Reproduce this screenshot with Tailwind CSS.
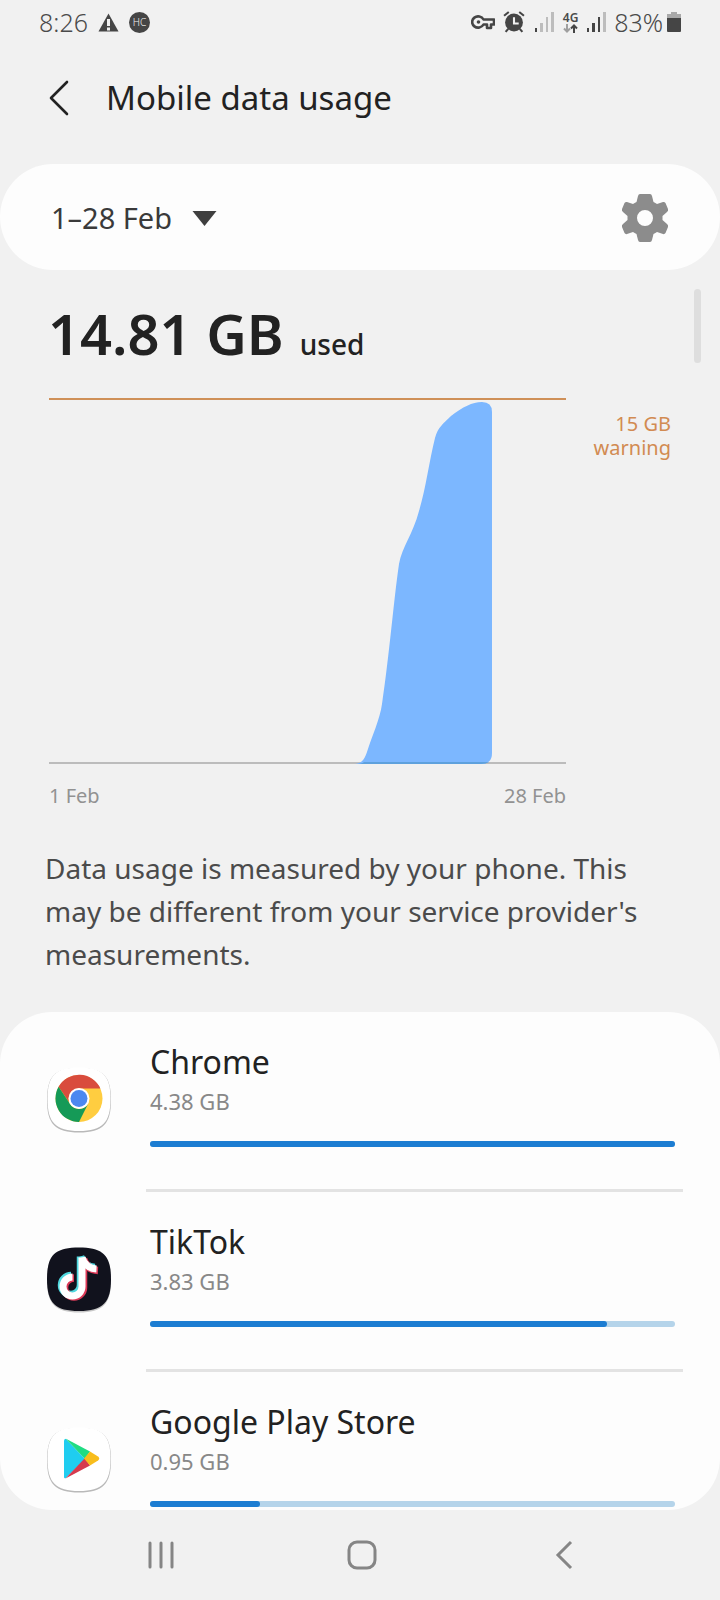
<!DOCTYPE html>
<html lang="en">
<head>
    <meta charset="UTF-8">
    <meta name="viewport" content="width=device-width, initial-scale=1.0">
    <title>Mobile data usage</title>
    <script src="https://cdn.jsdelivr.net/npm/@tailwindcss/browser@4"></script>
</head>
<body class="min-h-screen flex flex-col bg-[#f1f1f1] text-[#222222] font-['Noto_Sans',sans-serif]">
    <!-- Status bar -->
    <div class="flex items-center justify-between h-11 pl-[39px] pr-[39px] text-[25px] leading-[44px] font-light text-[#4a4a4a]">
        <div class="flex items-center">
            <span>8:26</span>
            <svg class="ml-2.5 w-[21px] h-[19px]" viewBox="0 0 21 19" fill="#454545">
                <path d="M10.5 0.5L20.5 18.5H0.5Z" />
                <path d="M9 6h3v7H9zM9 14.5h3v3H9z" fill="#f1f1f1" />
            </svg>
            <span class="ml-2.5 w-[21px] h-[21px] rounded-full bg-[#454545] text-[#f1f1f1] text-[10px] leading-[21px] text-center">HC</span>
        </div>
        <div class="flex items-center">
            <svg class="w-6 h-4" viewBox="0 0 24 16" fill="none" stroke="#454545" stroke-width="2.6">
                <path d="M12.5 5.5A6 5.6 0 1 0 12.5 10.5H16V14H20V10.5H23V5.5Z" stroke-linejoin="round" />
                <circle cx="7.5" cy="8" r="1.8" fill="#454545" stroke="none" />
            </svg>
            <svg class="ml-2 w-[22px] h-[22px]" viewBox="0 0 21 21" fill="none" stroke="#454545" stroke-width="2">
                <circle cx="10.5" cy="11" r="8.5" fill="#454545" stroke="none" />
                <path d="M1 4.5L5.5 1M20 4.5L15.5 1M5 17L2.5 20M16 17l2.5 3" />
                <path d="M10.5 6v6H15" stroke="#f1f1f1" />
            </svg>
            <svg class="ml-2.5 w-[19px] h-5" viewBox="0 0 19 20" fill="#bdbdbd">
                <path d="M0 16h2v4H0z" fill="#454545" />
                <path d="M5 11h3v9H5zM11 5h2v15h-2zM16 0h3v20h-3z" />
            </svg>
            <div class="ml-2 w-[17px] flex flex-col items-center">
                <span class="text-[12px] leading-[12px] font-semibold">4G</span>
                <svg class="w-[15px] h-[9px]" viewBox="0 0 15 9" fill="none" stroke-width="2">
                    <path d="M4 0v7M1 4.5l3 3 3-3" stroke="#9f9f9f" />
                    <path d="M11 9V2M8 4.5l3-3 3 3" stroke="#454545" />
                </svg>
            </div>
            <svg class="ml-2 w-[19px] h-5" viewBox="0 0 19 20" fill="#454545">
                <path d="M0 16h2v4H0zM5 11h3v9H5zM11 5h2v15h-2z" />
                <path d="M16 0h3v20h-3z" fill="#bdbdbd" />
            </svg>
            <span class="ml-2">83%</span>
            <svg class="ml-1 w-[14px] h-5" viewBox="0 0 14 20" fill="#454545">
                <path d="M4 0h6v2h4v5H0V2h4z" fill="#a9a9a9" />
                <path d="M0 6h14v13q0 1-1 1H1q-1 0-1-1z" />
            </svg>
        </div>
    </div>

    <!-- Header -->
    <header class="flex items-center h-[120px] pl-12 pb-3">
        <button type="button" aria-label="Back">
            <svg class="w-6 h-9" viewBox="0 0 24 36" fill="none" stroke="#222222" stroke-width="2.6" stroke-linecap="round" stroke-linejoin="round">
                <path d="M19 2L3 18l16 16" />
            </svg>
        </button>
        <h1 class="ml-[34px] text-[33px] leading-10">Mobile data usage</h1>
    </header>

    <!-- Billing period -->
    <section class="flex items-center justify-between h-[106px] pl-[51px] pr-[51px] pt-0.5 rounded-[53px] bg-[#fdfdfd]">
        <button type="button" class="flex items-center gap-5 text-[29px] leading-10 text-[#3a3a3a]">
            1–28 Feb
            <svg class="w-[25px] h-[15px]" viewBox="0 0 25 15" fill="#3f3f3f"><path d="M0.5 0H24.5L12.5 15Z" /></svg>
        </button>
        <button type="button" aria-label="Settings">
            <svg class="w-12 h-12" viewBox="0 0 48 48" fill="#8c8c8c" fill-rule="evenodd">
                <path d="M19 0H29Q30.5 0 31 2L32.5 8Q34.5 9 36 10L42 8Q43.5 7.5 44.5 9L47 15Q47.5 17 46 18L41.5 22V26L46 30Q47.5 31 47 33L44.5 39Q43.5 40.5 42 40L36 38Q34.5 39 32.5 40L31 46Q30.5 48 29 48H19Q17.5 48 17 46L15.5 40Q13.5 39 12 38L6 40Q4.5 40.5 3.5 39L1 33Q0.5 31 2 30L6.5 26V22L2 18Q0.5 17 1 15L3.5 9Q4.5 7.5 6 8L12 10Q13.5 9 15.5 8L17 2Q17.5 0 19 0ZM24 16A8 8 0 1 0 24 32A8 8 0 1 0 24 16Z" />
            </svg>
        </button>
    </section>

    <!-- Usage -->
    <main class="relative flex flex-col">
        <div class="absolute right-[19px] top-[19px] w-[7px] h-[74px] rounded-full bg-[#dedede]"></div>

        <p class="flex items-baseline gap-4 pl-12 pt-[25px] h-32 leading-[76px] text-[56px] font-semibold">
            14.81 GB
            <span class="text-[28px] font-medium">used</span>
        </p>

        <div class="flex px-[49px]">
            <div class="flex-1">
                <svg class="w-full h-[366px]" viewBox="0 0 517 366" preserveAspectRatio="none">
                    <path d="M0 1H517" stroke="#cf9058" stroke-width="2" />
                    <path d="M0 365H517" stroke="#bcbcbc" stroke-width="2" />
                    <path d="M306 366C312 365 315 363 318 354C323 338 331 321 333 306C340 260 345 200 350 166C353 149 364 136 370 113C377 90 380 64 386 40C389 29 394 26 402 18C414 9 423 4 433 4Q443 4 443 14V355Q443 366 432 366Z" fill="#7cb7ff" />
                    <path d="M306 366Q313 366 315 364H440Q437 366 432 366Z" fill="#5ea1dd" />
                </svg>
                <div class="flex justify-between pt-4 text-[20px] leading-8 text-[#929292]">
                    <span>1 Feb</span>
                    <span>28 Feb</span>
                </div>
            </div>
            <p class="w-[105px] pt-[14px] text-right text-[20px] leading-6 text-[#d28b52]">15 GB<br>warning</p>
        </div>

        <p class="px-[45px] pt-[35px] pb-9 text-[28px] leading-[43px] text-[#4b4b4b]">Data usage is measured by your phone. This may be different from your service provider's measurements.</p>
    </main>

    <!-- Apps -->
    <ul class="rounded-[52px] bg-[#fdfdfd] overflow-hidden">
        <li class="flex gap-[35px] pl-[47px] pr-[37px]">
            <svg class="mt-[55px] w-16 h-[66px] shrink-0" viewBox="0 0 64 66">
                <path d="M32 1C56 1 64 9 64 33S56 65.5 32 65.5S0 57 0 33S8 1 32 1Z" fill="#b9b9b9" />
                <path d="M32 0.5C55.5 0.5 63.5 8.5 63.5 32S55.5 64 32 64S0.5 55.5 0.5 32S8.5 0.5 32 0.5Z" fill="#ffffff" />
                <circle cx="32" cy="31.5" r="23.5" fill="#ffcd40" />
                <path d="M11.6 19.8A23.5 23.5 0 0 1 53.4 21.5H32A10.5 10.5 0 0 0 22 35Z" fill="#d94c3d" />
                <path d="M11.6 19.8L22.9 36.7A10.5 10.5 0 0 0 41 37L32 55A23.5 23.5 0 0 1 11.6 19.8Z" fill="#159a57" />
                <circle cx="32" cy="31.5" r="10.5" fill="#ffffff" />
                <circle cx="32" cy="31.5" r="8.5" fill="#4c88f0" />
            </svg>
            <div class="flex-1 h-[180px] pt-7 border-b-3 border-[#e3e3e3]">
                <div class="pl-1 pr-2">
                    <h2 class="text-[32px] leading-[44px]">Chrome</h2>
                    <p class="text-[22px] leading-[34px] text-[#888888]">4.38 GB</p>
                    <div class="mt-[23px] h-1.5 rounded-full bg-[#b5d4ea]">
                        <div class="h-full rounded-full bg-[#1c7dd2]" style="width: 100%"></div>
                    </div>
                </div>
            </div>
        </li>
        <li class="flex gap-[35px] pl-[47px] pr-[37px]">
            <svg class="mt-[55px] w-16 h-[66px] shrink-0" viewBox="0 0 64 66">
                <path d="M32 1C56 1 64 9 64 33S56 65.5 32 65.5S0 57 0 33S8 1 32 1Z" fill="#c8c8c8" />
                <path d="M32 0.5C56 0.5 64 8.5 64 32S56 64 32 64S0 56 0 32S8 0.5 32 0.5Z" fill="#11121d" />
                <g fill="none" stroke="#4fd8df" stroke-width="7.5">
                    <path d="M33.5 9.5V38A9.5 9.5 0 1 1 24 28.5" />
                    <path d="M33.5 9.5Q37 20 48 20.5" />
                </g>
                <g fill="none" stroke="#dd3a58" stroke-width="7.5">
                    <path d="M36.5 12V40.5A9.5 9.5 0 1 1 27 31" />
                    <path d="M36.5 12Q40 23 51 23.5" />
                </g>
                <g fill="none" stroke="#ffffff" stroke-width="7">
                    <path d="M35 10.5V39.5A9.5 9.5 0 1 1 25.5 30" />
                    <path d="M35 10.5Q38.5 21.5 49.500 22" />
                </g>
            </svg>
            <div class="flex-1 h-[180px] pt-7 border-b-3 border-[#e3e3e3]">
                <div class="pl-1 pr-2">
                    <h2 class="text-[32px] leading-[44px]">TikTok</h2>
                    <p class="text-[22px] leading-[34px] text-[#888888]">3.83 GB</p>
                    <div class="mt-[23px] h-1.5 rounded-full bg-[#b5d4ea]">
                        <div class="h-full rounded-full bg-[#1c7dd2]" style="width: 87%"></div>
                    </div>
                </div>
            </div>
        </li>
        <li class="flex gap-[35px] pl-[47px] pr-[37px]">
            <svg class="mt-[55px] w-16 h-[66px] shrink-0" viewBox="0 0 64 66">
                <path d="M32 1C56 1 64 9 64 33S56 65.5 32 65.5S0 57 0 33S8 1 32 1Z" fill="#b9b9b9" />
                <path d="M32 0.5C55.5 0.5 63.5 8.5 63.5 32S55.5 64 32 64S0.5 55.5 0.5 32S8.5 0.5 32 0.5Z" fill="#ffffff" />
                <path d="M17 14V50Q17 52 19 51L38 32L19 12Q17 11.5 17 14Z" fill="#1fcdf0" />
                <path d="M18.5 11.5L43 24.5L38 32Z" fill="#20dc83" />
                <path d="M18.5 51.5L43 38.5L38 31Z" fill="#d63a4e" />
                <path d="M43 24.5L51 29.5Q53.5 31.5 51 33.5L43 38.5L37 31.5Z" fill="#f8bd1c" />
            </svg>
            <div class="flex-1 h-[138px] pt-7">
                <div class="pl-1 pr-2">
                    <h2 class="text-[32px] leading-[44px]">Google Play Store</h2>
                    <p class="text-[22px] leading-[34px] text-[#888888]">0.95 GB</p>
                    <div class="mt-[23px] h-1.5 rounded-full bg-[#b5d4ea]">
                        <div class="h-full rounded-full bg-[#1c7dd2]" style="width: 21%"></div>
                    </div>
                </div>
            </div>
        </li>
    </ul>

    <!-- Navigation bar -->
    <nav class="flex flex-1 items-center justify-between pl-[146px] pr-[146px] min-h-[90px]">
        <button type="button" aria-label="Recent apps">
            <svg class="w-[30px] h-[30px]" viewBox="0 0 30 30" fill="none" stroke="#858585" stroke-width="3" stroke-linecap="round">
                <path d="M4 3V27M15 3V27M26 3V27" />
            </svg>
        </button>
        <button type="button" aria-label="Home">
            <svg class="w-[30px] h-[30px]" viewBox="0 0 30 30" fill="none" stroke="#858585" stroke-width="3">
                <rect x="2" y="2" width="26" height="26" rx="8" />
            </svg>
        </button>
        <button type="button" aria-label="Back">
            <svg class="w-[26px] h-[30px]" viewBox="0 0 26 30" fill="none" stroke="#858585" stroke-width="3">
                <path d="M23 2L10 15l13 13" />
            </svg>
        </button>
    </nav>
</body>
</html>
